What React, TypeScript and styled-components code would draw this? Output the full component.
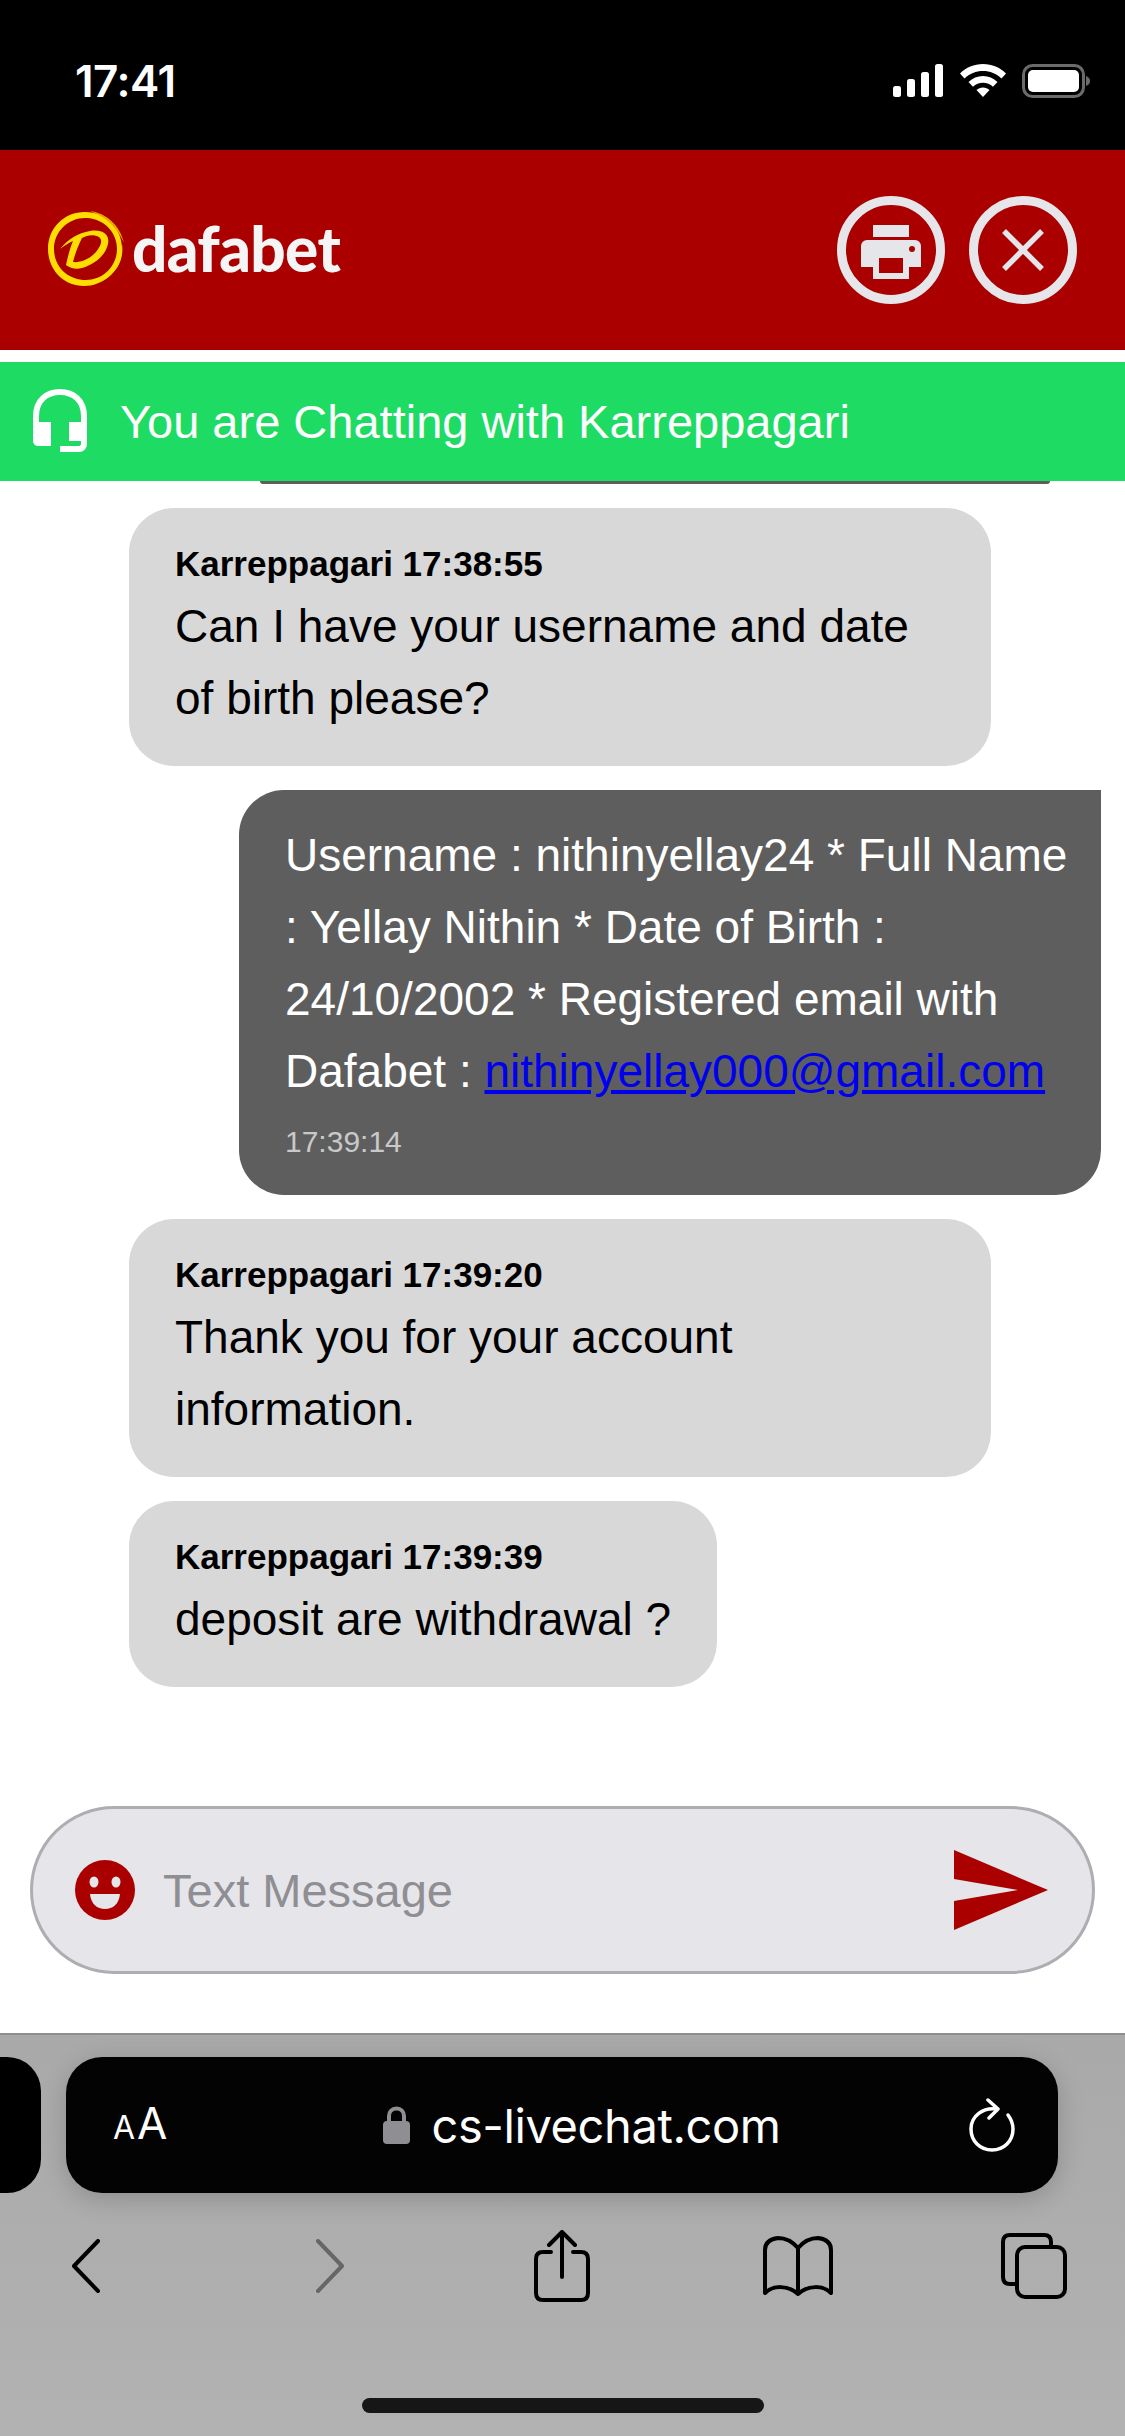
import styled, { createGlobalStyle } from 'styled-components';

const Global = createGlobalStyle`
  html, body {
    margin: 0;
    padding: 0;
    background: #fff;
  }
  * {
    box-sizing: border-box;
  }
`;

const Screen = styled.div`
  width: 1125px;
  height: 2436px;
  display: flex;
  flex-direction: column;
  overflow: hidden;
  background: #fff;
  font-family: 'Liberation Sans', Arial, sans-serif;
`;

const StatusBar = styled.div`
  height: 150px;
  flex: none;
  background: #000;
  display: flex;
  align-items: flex-start;
  justify-content: space-between;
  padding: 55px 34px 0 75px;
  color: #fff;
`;

const Clock = styled.div`
  font-family: Inter, sans-serif;
  font-weight: 600;
  font-size: 44px;
  line-height: 52px;
  letter-spacing: -0.5px;
`;

const StatusIcons = styled.div`
  display: flex;
  align-items: flex-start;
  gap: 16px;
  padding-top: 9px;
`;

const Header = styled.header`
  height: 200px;
  flex: none;
  background: #aa0000;
  display: flex;
  align-items: center;
  justify-content: space-between;
  padding: 0 48px 0 44px;
`;

const Logo = styled.div`
  display: flex;
  align-items: center;
  gap: 0;
`;

const Wordmark = styled.span`
  font-family: Lato, sans-serif;
  font-weight: 900;
  font-size: 62px;
  line-height: 70px;
  letter-spacing: -0.6px;
  color: #f5f5f5;
  margin-bottom: 4px;
`;

const HeaderActions = styled.div`
  display: flex;
  gap: 24px;
`;

const RoundButton = styled.button`
  width: 108px;
  height: 108px;
  padding: 0;
  background: none;
  border: 0;
  display: block;
  svg {
    display: block;
  }
`;

const AgentBar = styled.div`
  margin-top: 12px;
  height: 119px;
  flex: none;
  background: #1edb64;
  display: flex;
  align-items: center;
  gap: 33px;
  padding-left: 33px;
  color: #fff;
  font-size: 47px;
  position: relative;
  z-index: 1;
`;

const ChatArea = styled.div`
  height: 1270px;
  flex: none;
  overflow: hidden;
  display: flex;
  flex-direction: column;
  gap: 24px;
  padding: 0 24px 0 129px;
`;

const PeekBubble = styled.div`
  flex: none;
  height: 3px;
  width: 790px;
  margin-left: 131px;
  background: #5e5e5e;
  border-radius: 0 0 12px 12px;
`;

const Bubble = styled.div<{ $mine?: boolean; $fit?: boolean }>`
  flex: none;
  width: ${(p) => (p.$fit ? 'fit-content' : '862px')};
  align-self: ${(p) => (p.$mine ? 'flex-end' : 'flex-start')};
  padding: ${(p) => (p.$mine ? '29px 28px 26px 46px' : '30px 46px 32px 46px')};
  border-radius: ${(p) => (p.$mine ? '45px 0 45px 45px' : '45px')};
  background: ${(p) => (p.$mine ? '#5e5e5e' : '#d8d8d8')};
  color: ${(p) => (p.$mine ? '#fff' : '#000')};
  font-size: 46px;
  line-height: 72px;
`;

const Sender = styled.div`
  font-size: 35px;
  font-weight: 700;
  line-height: 52px;
`;

const Stamp = styled.div`
  margin-top: 8px;
  font-size: 30px;
  line-height: 54px;
  color: #c9c9c9;
`;

const MailLink = styled.a`
  color: #0000ee;
  text-decoration: underline;
`;

const ComposerWrap = styled.div`
  flex: 1;
  padding: 55px 30px 0;
`;

const Composer = styled.div`
  height: 168px;
  border: 3px solid #aeaeb2;
  border-radius: 84px;
  background: #e5e5ea;
  display: flex;
  align-items: center;
  padding: 0 44px 0 42px;
`;

const Placeholder = styled.span`
  flex: 1;
  margin-left: 28px;
  font-size: 47px;
  color: #8e8e93;
`;

const Toolbar = styled.div`
  height: 403px;
  flex: none;
  border-top: 2px solid #8e8e8e;
  background: linear-gradient(#a9a9a9, #b2b2b2);
  display: flex;
  flex-direction: column;
`;

const TabRow = styled.div`
  display: flex;
  gap: 25px;
  margin-top: 22px;
`;

const TabStub = styled.div`
  width: 41px;
  height: 136px;
  background: #000;
  border-radius: 0 34px 34px 0;
`;

const UrlBar = styled.div`
  width: 992px;
  height: 136px;
  background: #030303;
  border-radius: 36px;
  box-shadow: 0 6px 26px rgba(0, 0, 0, 0.18);
  display: flex;
  align-items: center;
  justify-content: space-between;
  padding: 0 43px 0 47px;
  color: #fff;
  font-family: Inter, sans-serif;
`;

const TextSize = styled.span`
  display: flex;
  align-items: baseline;
  gap: 2px;
  width: 60px;
  font-size: 44px;
  line-height: 56px;
  small {
    font-size: 32px;
  }
`;

const Address = styled.span`
  display: flex;
  align-items: center;
  gap: 21px;
  font-size: 47px;
  letter-spacing: -0.4px;
  margin-left: 22px;
`;

const NavRow = styled.nav`
  display: grid;
  grid-template-columns: 172px 316px 148px 324px 148px;
  justify-items: center;
  align-items: center;
  height: 72px;
  margin-top: 37px;
`;

const HomeBar = styled.div`
  width: 402px;
  height: 15px;
  margin: 96px auto 0;
  background: #161616;
  border-radius: 8px;
`;

const messages = [
  { who: 'Karreppagari 17:38:55', text: 'Can I have your username and date of birth please?' },
  { who: 'Karreppagari 17:39:20', text: 'Thank you for your account information.' },
];

export default function App() {
  return (
    <Screen>
      <Global />
      <StatusBar>
        <Clock>17:41</Clock>
        <StatusIcons>
          <svg width="51" height="33" viewBox="0 0 51 33" fill="#fff">
            <rect x="0" y="22" width="8" height="11" rx="2.5" />
            <rect x="14" y="15" width="8" height="18" rx="2.5" />
            <rect x="28" y="8" width="8" height="25" rx="2.5" />
            <rect x="42" y="0" width="8" height="33" rx="2.5" />
          </svg>
          <svg width="46" height="33" viewBox="0 0 46 33" fill="#fff">
            <path d="M23 0C32 0 40 3.500 46 9.500L41.500 14.500C36.500 9.500 30 7 23 7S9.500 9.500 4.500 14.500L0 9.500C6 3.500 14 0 23 0Z" />
            <path d="M23 12C28.500 12 33.500 14 37.500 18L33 22.800C30.300 20.200 26.800 18.800 23 18.800S15.700 20.200 13 22.800L8.500 18C12.500 14 17.500 12 23 12Z" />
            <path d="M23 23.500C25.500 23.500 27.700 24.500 29.500 26L23 33L16.500 26C18.300 24.500 20.500 23.500 23 23.500Z" />
          </svg>
          <svg width="69" height="34" viewBox="0 0 69 34">
            <rect x="1.500" y="1.500" width="60" height="31" rx="9" fill="none" stroke="#6b6b6b" strokeWidth="3" />
            <rect x="6" y="6" width="51" height="22" rx="5" fill="#fff" />
            <path d="M64 12C67 13 68 15 68 17S67 21 64 22Z" fill="#6b6b6b" />
          </svg>
        </StatusIcons>
      </StatusBar>

      <Header>
        <Logo>
          <svg width="88" height="84" viewBox="0 0 88 84">
            <path
              fillRule="evenodd"
              fill="#ffdd00"
              d="M41 4C62 4 78 20 78 41C78 62 60 78 40 78C19 78 4 61 4 41C4 20 20 4 41 4ZM43 10C25 9 10 23 10 41C10 59 24 72 42 72C59 72 73 58 73 41C73 24 60 11 43 10Z"
            />
            <path d="M46 3C62 5 76 17 80 35C73 19 62 9 46 3Z" fill="#e8a800" />
            <path d="M78 36C80 50 74 62 64 69C71 60 76 49 78 36Z" fill="#ffdd00" />
            <path
              fillRule="evenodd"
              fill="#ffdd00"
              d="M16 41C24 31 34 25 46 23C58 21 66 26 64 36C62 46 52 56 38 60C32 62 26 60 22 57C24 48 26 40 29 33C24 35 20 38 16 41ZM29 54C36 55 46 51 52 44C57 38 59 32 55 29C50 26 43 27 38 30C34 38 31 46 29 54Z"
            />
          </svg>
          <Wordmark>dafabet</Wordmark>
        </Logo>
        <HeaderActions>
          <RoundButton aria-label="Print">
            <svg width="108" height="108" viewBox="0 0 108 108">
              <circle cx="54" cy="54" r="49.500" fill="none" stroke="#e5e5ea" strokeWidth="9" />
              <rect x="36" y="29" width="36" height="12" fill="#e5e5ea" />
              <path
                fillRule="evenodd"
                fill="#e5e5ea"
                d="M30 44H78A6 6 0 0 1 84 50V71H72V83H36V71H24V50A6 6 0 0 1 30 44ZM42 62V77H66V62Z"
              />
              <circle cx="75" cy="53" r="3" fill="#aa0000" />
            </svg>
          </RoundButton>
          <RoundButton aria-label="Close">
            <svg width="108" height="108" viewBox="0 0 108 108">
              <circle cx="54" cy="54" r="49.500" fill="none" stroke="#e5e5ea" strokeWidth="9" />
              <path d="M35 35L73 73M73 35L35 73" fill="none" stroke="#e5e5ea" strokeWidth="5.500" />
            </svg>
          </RoundButton>
        </HeaderActions>
      </Header>

      <AgentBar>
        <svg width="54" height="66" viewBox="0 0 54 66">
          <path
            d="M3 45V27C3 12 13 3 27 3S51 12 51 27V55C51 58 49 60 46 60H27"
            fill="none"
            stroke="#fff"
            strokeWidth="6"
          />
          <path d="M0 33H18V57H6C2 57 0 55 0 51Z" fill="#fff" />
          <path d="M36 33H54V52H36Z" fill="#fff" />
        </svg>
        You are Chatting with Karreppagari
      </AgentBar>

      <ChatArea>
        <PeekBubble />
        <Bubble>
          <Sender>{messages[0].who}</Sender>
          {messages[0].text}
        </Bubble>
        <Bubble $mine>
          Username : nithinyellay24 * Full Name : Yellay Nithin * Date of Birth : 24/10/2002 * Registered email with
          Dafabet : <MailLink href="#">nithinyellay000@gmail.com</MailLink>
          <Stamp>17:39:14</Stamp>
        </Bubble>
        <Bubble>
          <Sender>{messages[1].who}</Sender>
          {messages[1].text}
        </Bubble>
        <Bubble $fit>
          <Sender>Karreppagari 17:39:39</Sender>
          deposit are withdrawal ?
        </Bubble>
      </ChatArea>

      <ComposerWrap>
        <Composer>
          <svg width="60" height="60" viewBox="0 0 60 60">
            <circle cx="30" cy="30" r="30" fill="#aa0000" />
            <ellipse cx="19" cy="22" rx="4.500" ry="5.500" fill="#e5e5ea" />
            <ellipse cx="41" cy="22" rx="4.500" ry="5.500" fill="#e5e5ea" />
            <path d="M15 34H45C44 44 38 49 30 49S16 44 15 34Z" fill="#e5e5ea" />
          </svg>
          <Placeholder>Text Message</Placeholder>
          <svg width="94" height="80" viewBox="0 0 94 80">
            <path d="M0 0L94 40L0 80V51L64 40L0 29Z" fill="#aa0000" />
          </svg>
        </Composer>
      </ComposerWrap>

      <Toolbar>
        <TabRow>
          <TabStub />
          <UrlBar>
            <TextSize>
              <small>A</small>A
            </TextSize>
            <Address>
              <svg width="27" height="38" viewBox="0 0 27 38">
                <path d="M6 16V10C6 5.500 9 2.500 13.500 2.500S21 5.500 21 10V16" fill="none" stroke="#8e8e93" strokeWidth="4" />
                <rect x="0" y="15" width="27" height="23" rx="4" fill="#8e8e93" />
              </svg>
              cs-livechat.com
            </Address>
            <svg width="46" height="54" viewBox="0 0 46 54" fill="none" stroke="#fff" strokeWidth="3.500" strokeLinecap="round" strokeLinejoin="round">
              <path d="M28 11C14 9 2 18 2 31C2 43 11 52 23 52S44 43 44 31C44 25 42 21 39 17" />
              <path d="M19 2L29 11L20 20" />
            </svg>
          </UrlBar>
        </TabRow>
        <NavRow>
          <svg width="28" height="54" viewBox="0 0 28 54" fill="none" stroke="#000" strokeWidth="4" strokeLinecap="round" strokeLinejoin="round">
            <path d="M26 2L2 27L26 52" />
          </svg>
          <svg width="28" height="54" viewBox="0 0 28 54" fill="none" stroke="#666" strokeWidth="4" strokeLinecap="round" strokeLinejoin="round">
            <path d="M2 2L26 27L2 52" />
          </svg>
          <svg width="56" height="72" viewBox="0 0 56 72" fill="none" stroke="#000" strokeWidth="4" strokeLinecap="round" strokeLinejoin="round">
            <path d="M28 47V2M15 15L28 2L41 15" />
            <path d="M17 22H9C4.500 22 2 24.500 2 29V63C2 67.500 4.500 70 9 70H47C51.500 70 54 67.500 54 63V29C54 24.500 51.500 22 47 22H39" />
          </svg>
          <svg width="70" height="60" viewBox="0 0 70 60" fill="none" stroke="#000" strokeWidth="4" strokeLinecap="round" strokeLinejoin="round">
            <path d="M35 12C29 5 22 2 15 2C7 3 2 7 2 14V57C10 49 25 49 35 58C45 49 60 49 68 57V14C68 7 63 3 55 2C48 2 41 5 35 12V58" />
          </svg>
          <svg width="66" height="66" viewBox="0 0 66 66" fill="none" stroke="#000" strokeWidth="4" strokeLinecap="round" strokeLinejoin="round">
            <path d="M50 14V9C50 4.500 47.500 2 43 2H9C4.500 2 2 4.500 2 9V44C2 48.500 4.500 51 9 51H16" />
            <rect x="16" y="14" width="48" height="50" rx="8" />
          </svg>
        </NavRow>
        <HomeBar />
      </Toolbar>
    </Screen>
  );
}
